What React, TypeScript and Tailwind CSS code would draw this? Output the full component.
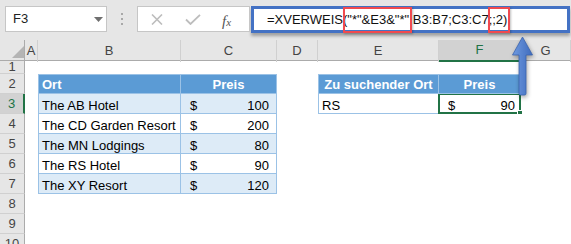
import React from "react";

const cols = "grid grid-cols-[25px_13px_143px_96px_41px_121px_82px_1fr]";

const hotels = [
  { ort: "The AB Hotel", preis: 100 },
  { ort: "The CD Garden Resort", preis: 200 },
  { ort: "The MN Lodgings", preis: 80 },
  { ort: "The RS Hotel", preis: 90 },
  { ort: "The XY Resort", preis: 120 },
];

const RowHead = ({ n, active = false, short = false }: { n: number; active?: boolean; short?: boolean }) => (
  <div
    className={`flex items-end justify-center border-b border-[#d0d0d0] ${
      short ? "leading-[12px] pb-[0px]" : "leading-[15px] pb-[2px]"
    } ${
      active
        ? "bg-[#d2d2d2] text-[#217346] border-r-2 border-r-[#217346]"
        : "bg-[#e6e6e6] text-[#444] border-r border-r-[#ababab]"
    }`}
  >
    {n}
  </div>
);

const Row = ({
  n,
  h = "h-[20px]",
  active = false,
  short = false,
  children,
}: {
  n: number;
  h?: string;
  active?: boolean;
  short?: boolean;
  children?: React.ReactNode;
}) => (
  <div className={`${cols} ${h} overflow-hidden`}>
    <RowHead n={n} active={active} short={short} />
    {children}
  </div>
);

const Empty = () => <div />;

const RedBox = ({ children, l, r }: { children: React.ReactNode; l: string; r: string }) => (
  <span className="relative">
    {children}
    <span
      className={`absolute ${l} ${r} top-[-5px] bottom-[-6px] border-2 border-[#f04a4f] shadow-[1px_1px_2px_rgba(0,0,0,0.25)]`}
    />
  </span>
);

export default function App() {
  return (
    <div className="relative w-[571px] h-[244px] overflow-hidden bg-white font-['Liberation_Sans',Arial,sans-serif] text-[13px] text-black">
      {/* formula bar */}
      <div className="h-[40px] bg-[#e6e6e6] flex items-start pt-[6px] pl-[5px]">
        <div className="relative w-[102px] h-[26px] bg-white border border-[#c6c6c6] flex items-center pl-[7px] text-[#222]">
          F3
          <svg className="absolute left-[88px] top-[10px]" width="9" height="5" viewBox="0 0 9 5">
            <path d="M0 0h9L4.5 5z" fill="#6f6f6f" />
          </svg>
        </div>
        <div className="w-[30px] flex flex-col items-center gap-[3px] pt-[7px]">
          <span className="w-[2px] h-[2px] bg-[#a8a8a8]" />
          <span className="w-[2px] h-[2px] bg-[#a8a8a8]" />
          <span className="w-[2px] h-[2px] bg-[#a8a8a8]" />
        </div>
        <div className="relative w-[113px] h-[26px] bg-white border border-[#c6c6c6] flex items-center">
          <svg className="absolute left-[13px] top-[7px]" width="12" height="11" viewBox="0 0 12 11">
            <path d="M1 0.5l10 10M11 0.5l-10 10" stroke="#bdbdbd" strokeWidth="1.6" fill="none" />
          </svg>
          <svg className="absolute left-[47px] top-[7px]" width="16" height="11" viewBox="0 0 16 11">
            <path d="M1 5.5l4.5 4.5L15 0.8" stroke="#bdbdbd" strokeWidth="1.8" fill="none" />
          </svg>
          <span className="absolute left-[84px] top-[3px] italic font-['Liberation_Serif',serif] text-[15px] text-[#555]">
            f<span className="text-[11px]">x</span>
          </span>
        </div>
        <div className="flex-1 mr-[1px] ml-[1px] h-[27px] bg-white border-[3px] border-[#4472c4] shadow-[0_3px_3px_rgba(0,0,0,0.3)] flex items-center pl-[13px] leading-[15px] whitespace-nowrap text-[#111]">
          =XVERWEIS(
          <RedBox l="-left-[4px]" r="-right-[3px]">"*"&amp;E3&amp;"*"</RedBox>
          ;B3:B7;C3:C7;
          <RedBox l="-left-[4px]" r="-right-[3px]">;2)</RedBox>
        </div>
      </div>

      {/* column headers */}
      <div className={`${cols} h-[21px] bg-[#e6e6e6] border-b border-[#ababab] text-[#444]`}>
        <div className="relative border-r border-[#ababab]">
          <svg className="absolute left-[12px] top-[6px]" width="12" height="12" viewBox="0 0 12 12">
            <path d="M12 0V12H0z" fill="#b4b4b4" />
          </svg>
        </div>
        {["A", "B", "C", "D", "E", "F", "G"].map((c) => (
          <div
            key={c}
            className={`flex items-center justify-center border-r border-[#d0d0d0] ${
              c === "F" ? "bg-[#d2d2d2] border-b-2 border-b-[#217346] text-[#217346]" : ""
            }`}
          >
            {c}
          </div>
        ))}
      </div>

      {/* rows */}
      <Row n={1} h="h-[13px]" short />
      <Row n={2}>
        <Empty />
        <div className="flex items-end pl-[3px] pb-[1px] leading-[15px] bg-[#5b9bd5] text-white font-bold border border-[#9bc2e6]">
          Ort
        </div>
        <div className="flex items-end justify-center pb-[1px] leading-[15px] bg-[#5b9bd5] text-white font-bold border-t border-r border-b border-[#9bc2e6]">
          Preis
        </div>
        <Empty />
        <div className="flex items-end justify-center pb-[1px] leading-[15px] bg-[#5b9bd5] text-white font-bold border border-[#9bc2e6]">
          Zu suchender Ort
        </div>
        <div className="flex items-end justify-center pb-[1px] leading-[15px] bg-[#5b9bd5] text-white font-bold border-t border-r border-b border-[#9bc2e6]">
          Preis
        </div>
        <Empty />
      </Row>
      {hotels.map((item, i) => {
        const band = i % 2 === 0 ? "bg-[#ddebf7]" : "bg-white";
        return (
          <Row key={item.ort} n={i + 3} active={i === 0}>
            <Empty />
            <div className={`flex items-end pl-[3px] leading-[15px] border-l border-r border-b border-[#9bc2e6] ${band}`}>
              {item.ort}
            </div>
            <div className={`flex items-end justify-between pl-[9px] pr-[7px] leading-[15px] border-r border-b border-[#9bc2e6] ${band}`}>
              <span>$</span>
              <span>{item.preis}</span>
            </div>
            <Empty />
            {i === 0 ? (
              <>
                <div className="flex items-end pl-[3px] leading-[15px] border-l border-r border-b border-[#9bc2e6]">RS</div>
                <div className="relative flex items-end justify-between pl-[9px] pr-[5px] leading-[15px] border-r border-b border-[#9bc2e6]">
                  <span>$</span>
                  <span>90</span>
                  <span className="absolute -left-[1px] -top-[1px] -right-[1px] -bottom-[1px] border-2 border-[#217346]" />
                  <span className="absolute -right-[3px] -bottom-[3px] w-[6px] h-[6px] bg-[#217346] border border-white" />
                </div>
              </>
            ) : (
              <>
                <Empty />
                <Empty />
              </>
            )}
            <Empty />
          </Row>
        );
      })}
      <Row n={8} />
      <Row n={9} />
      <Row n={10} />

      {/* arrow */}
      <svg
        className="absolute left-[511px] top-[36px] drop-shadow-[1px_2px_2px_rgba(0,0,0,0.35)]"
        width="24"
        height="62"
        viewBox="0 0 24 62"
      >
        <defs>
          <linearGradient id="ag" x1="0" y1="0" x2="1" y2="0">
            <stop offset="0" stopColor="#6f9ae0" />
            <stop offset="1" stopColor="#3e6bbd" />
          </linearGradient>
        </defs>
        <path
          d="M11.5 1L1.5 19H8V57.5Q8 59 9.5 59H13.5Q15 59 15 57.5V19H21.5Z"
          fill="url(#ag)"
          stroke="#3b63ad"
          strokeWidth="0.8"
        />
      </svg>
    </div>
  );
}
